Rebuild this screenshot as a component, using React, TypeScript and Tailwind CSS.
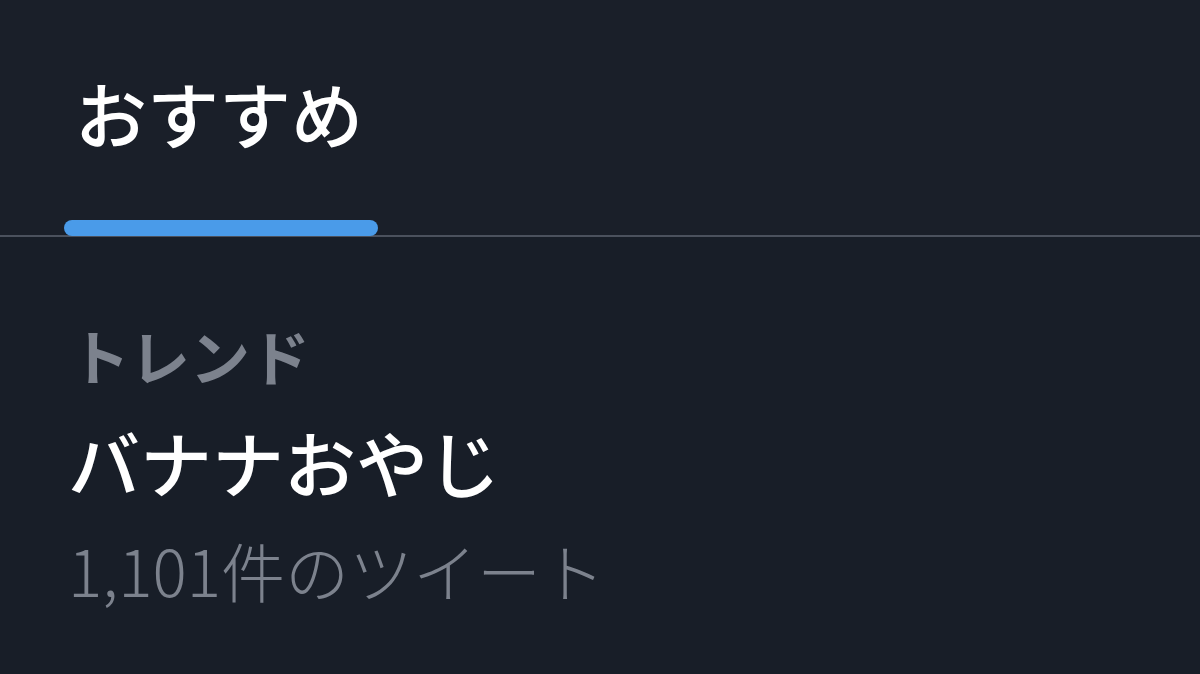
export default function App() {
  return (
    <div className="w-[1200px] h-[674px] bg-[#181e28] overflow-hidden" style={{ fontFamily: '"Noto Sans CJK JP", "Noto Sans", sans-serif' }}>
      {/* Tabs */}
      <div className="h-[237px] bg-[#1a1f29] border-b-2 border-[#4b515d] flex items-end px-[64px]">
        <div className="flex flex-col items-center w-[314px]">
          <span className="text-[72px] leading-none font-medium text-white mb-[72px] -ml-[4px]">おすすめ</span>
          <div className="h-[16px] w-full rounded-full bg-[#4a9be9] -mb-[1px]" />
        </div>
      </div>

      {/* Trend item */}
      <div className="px-[72px] pt-[88px] flex flex-col">
        <span className="text-[60px] leading-none font-bold text-[#7c828d] -ml-[2px]">トレンド</span>
        <span className="text-[72px] leading-none font-medium text-white mt-[40px] -ml-[4px]">バナナおやじ</span>
        <span className="text-[64px] leading-none font-light text-[#7c828d] mt-[40px] -ml-[4px]">1,101件のツイート</span>
      </div>
    </div>
  )
}
